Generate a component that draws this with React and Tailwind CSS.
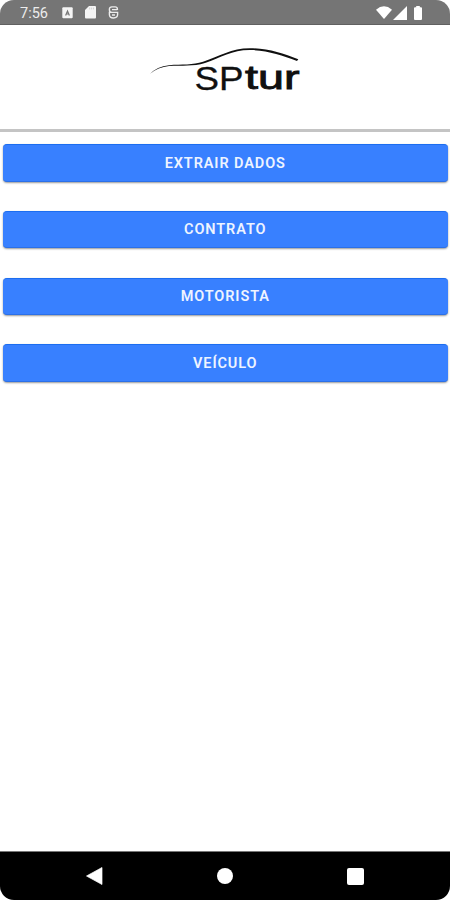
const menuItems = ["Extrair dados", "Contrato", "Motorista", "Veículo"];

function StatusBar() {
  return (
    <div className="flex h-[25px] shrink-0 items-center justify-between border-b border-[#606060] bg-[#757575] pl-5 pr-[28px] pt-px text-white">
      <div className="flex items-center">
        <span className="w-[29px] pt-[3px] text-[14.5px] leading-none text-[#ececec]">
          7:56
        </span>
        {/* Keyboard */}
        <svg className="ml-[13px]" width="11" height="12" viewBox="0 0 11 12">
          <rect x="0.3" y="0.3" width="10.4" height="11" rx="1" fill="#f4f4f4" />
          <path
            d="M3.6 8.4 5.5 4 7.4 8.4M4.2 7h2.6"
            fill="none"
            stroke="#757575"
            strokeWidth="1.2"
          />
        </svg>
        {/* SD card */}
        <svg className="ml-3" width="11" height="13" viewBox="0 0 11 13">
          <path d="M4 0h6q1 0 1 1v10.5q0 1-1 1H1q-1 0-1-1V4z" fill="#f4f4f4" />
          <path d="M4.7 1.6v1.8M6.6 1.6v1.8M8.5 1.6v1.8" stroke="#c5c5c5" strokeWidth="0.7" />
        </svg>
        {/* Security patch badge */}
        <svg
          className="ml-3"
          width="11"
          height="13"
          viewBox="0 0 11 13"
          fill="none"
          stroke="#ececec"
          strokeWidth="1.4"
        >
          <path d="M9.4 4V3Q9.3.9 7.1.9H3.9Q1.4.9 1.4 3.2V4Q1.4 6.4 4 6.4H9.6V8.6Q9.6 12 5.5 12T1.4 8.6V6.4H4" />
          <path d="M4 3.6h5.3M4 9h3" />
        </svg>
      </div>
      <div className="flex items-center">
        <svg width="16" height="13" viewBox="0 0 16 13" fill="white">
          <path d="M0 3.7Q8-3 16 3.7L8 13z" />
        </svg>
        <svg className="ml-px" width="14" height="14" viewBox="0 0 14 14" fill="white">
          <path d="M14 0v14H0z" />
        </svg>
        <svg className="ml-[7px]" width="8" height="14" viewBox="0 0 8 14" fill="white">
          <path d="M2.2 0h3.6v1.3H7q1 0 1 1V13q0 1-1 1H1q-1 0-1-1V2.3q0-1 1-1h1.2z" />
        </svg>
      </div>
    </div>
  );
}

function Logo() {
  return (
    <svg
      width="160"
      height="50"
      viewBox="145 45 160 50"
      fill="#101010"
      fontFamily='"Liberation Sans", Arial, sans-serif'
      fontSize="33"
    >
      {/* Car roof line, thicker towards the right */}
      <path d="M150 74Q157 66.3 169 65.2C182 64.2 193 65.3 203 61.8C220 56 231 48.3 250 48.2C268 48.2 283 53.3 298.3 59.3L297 61C282 55.2 268 50.5 251 50C233 49.5 221 57.7 205 62.9C193 66.7 182 64.9 169 66.1Q158 67.2 150 74Z" />
      <text
        x="194.5"
        y="89.5"
        textLength="49"
        lengthAdjust="spacingAndGlyphs"
        stroke="#101010"
        strokeWidth="0.3"
      >
        SP
      </text>
      <text
        x="245"
        y="89.3"
        textLength="54.5"
        lengthAdjust="spacingAndGlyphs"
        stroke="#101010"
        strokeWidth="0.9"
      >
        tur
      </text>
    </svg>
  );
}

function NavigationBar() {
  return (
    <div className="flex h-[49px] shrink-0 items-center justify-between border-t border-[#777] bg-black pl-[86px] pr-[86px]">
      <svg width="17" height="18" viewBox="0 0 17 18" fill="white">
        <path d="M16 .5v17L.5 9z" stroke="white" strokeWidth="0.7" strokeLinejoin="round" />
      </svg>
      <div className="h-4 w-4 rounded-full bg-white"></div>
      <div className="h-[17px] w-[17px] rounded-[2px] bg-white"></div>
    </div>
  );
}

export default function App() {
  return (
    <div className="h-[900px] w-[450px] bg-white">
      <div className="flex h-full flex-col overflow-hidden rounded-[14px] bg-white font-[Roboto,sans-serif]">
        <StatusBar />

        <header className="flex h-[107px] shrink-0 justify-center border-b-[3px] border-[#c4c4c4] pt-5">
          <Logo />
        </header>

        {/* Menu */}
        <main className="flex flex-1 flex-col gap-[29.2px] pl-[2.5px] pr-[2px] pt-[12.3px]">
          {menuItems.map((item) => (
            <button
              key={item}
              className="h-[37.5px] w-full rounded-[4px] border-y border-t-[#1c6df0] border-b-[#2b70e8] bg-[#3880ff] pt-[2px] text-center text-[14.5px] font-semibold uppercase leading-none tracking-[0.9px] text-[#eef4ff] shadow-[0_1px_2px_rgba(0,0,0,0.4)]"
            >
              {item}
            </button>
          ))}
        </main>

        <NavigationBar />
      </div>
    </div>
  );
}
